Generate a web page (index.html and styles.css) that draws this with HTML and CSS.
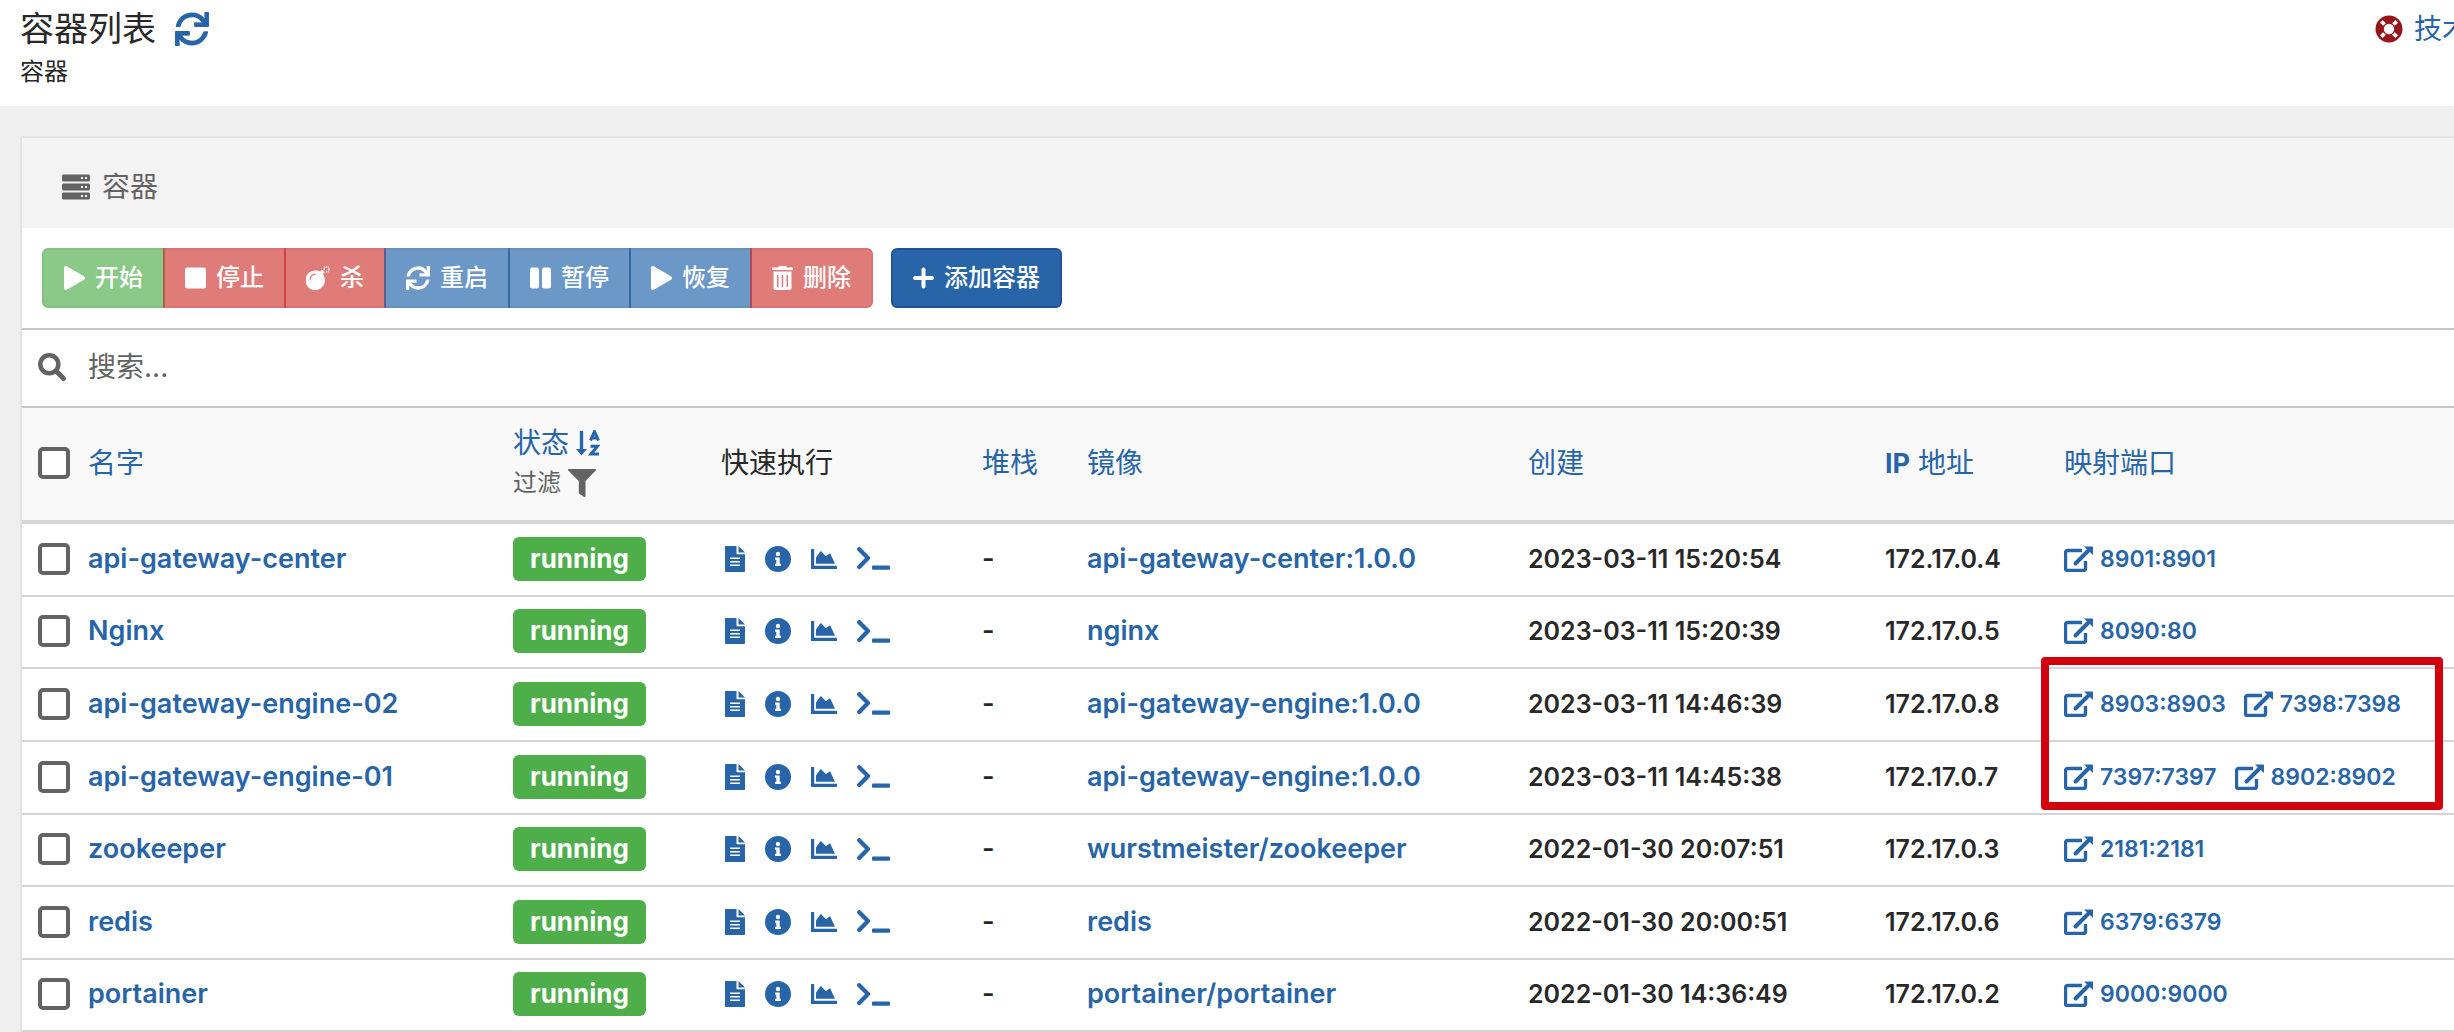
FILE: index.html
```html
<!DOCTYPE html>
<html lang="zh-CN">
<head>
<meta charset="utf-8">
<title>容器列表</title>
<link rel="stylesheet" href="styles.css">
</head>
<body>
<svg class="sprite" aria-hidden="true">
  <symbol id="sync" viewBox="0 0 512 512"><path d="M440.65 12.57l4 82.77A247.16 247.16 0 0 0 255.83 8C134.73 8 33.91 94.92 12.29 209.82A12 12 0 0 0 24.09 224h49.05a12 12 0 0 0 11.67-9.26 175.91 175.91 0 0 1 317-56.94l-101.46-4.86a12 12 0 0 0-12.57 12v47.41a12 12 0 0 0 12 12H500a12 12 0 0 0 12-12V12a12 12 0 0 0-12-12h-47.37a12 12 0 0 0-11.98 12.57zM255.83 432a175.61 175.61 0 0 1-146-77.8l101.8 4.87a12 12 0 0 0 12.57-12v-47.4a12 12 0 0 0-12-12H12a12 12 0 0 0-12 12V500a12 12 0 0 0 12 12h47.35a12 12 0 0 0 12-12.6l-4.15-82.57A247.17 247.17 0 0 0 255.83 504c121.11 0 221.93-86.92 243.55-201.82a12 12 0 0 0-11.8-14.18h-49.05a12 12 0 0 0-11.67 9.26A175.86 175.86 0 0 1 255.83 432z"/></symbol>
  <symbol id="play" viewBox="0 0 21 24"><path d="M0 2C0 .4 1.700-.4 3.100.4L20 10.300c1.300.8 1.300 2.600 0 3.400L3.100 23.600C1.700 24.400 0 23.600 0 22z"/></symbol>
  <symbol id="file" viewBox="0 0 20 26"><path fill-rule="evenodd" d="M1 0h10.500v7.200c0 .6.400 1 1 1H20V25c0 .6-.4 1-1 1H1c-.6 0-1-.4-1-1V1c0-.6.400-1 1-1zM5 11.500V13h10v-1.500zM5 15v1.500h10V15zM5 18.500V20h10v-1.500zM13.500 0L20 6.500h-6.500z"/></symbol>
  <symbol id="info" viewBox="0 0 26 26"><path fill-rule="evenodd" d="M13 0a13 13 0 1 1 0 26 13 13 0 0 1 0-26zM13 5.800a2.200 2.200 0 1 0 0 4.400 2.200 2.200 0 0 0 0-4.400zM10 11.500v2.300h1.300v3.900H10V20h6v-2.300h-1.300v-6.200z"/></symbol>
  <symbol id="chart" viewBox="0 0 26 20"><path d="M0 .6C0 .2.200 0 .6 0h2c.4 0 .6.200.6.600V16.800h22.200c.4 0 .6.200.6.600v2c0 .4-.2.600-.6.600H.6c-.4 0-.6-.2-.6-.6zM5 14.800V8.500l4.300-6c.3-.5.900-.5 1.200 0l4.300 4.800 3.700-2.700c.4-.3.800-.2 1 .300l4.500 9.900z"/></symbol>
  <symbol id="term" viewBox="0 0 33 23"><path d="M2.200 2.200L11 11 2.200 20" fill="none" stroke="currentColor" stroke-width="4.200" stroke-linecap="round" stroke-linejoin="round"/><rect x="15" y="18.600" width="18" height="4.200" rx="1"/></symbol>
  <symbol id="ext" viewBox="0 0 29 26"><path d="M18 4.500H3.500a2 2 0 0 0-2 2v16a2 2 0 0 0 2 2h16a2 2 0 0 0 2-2V15" fill="none" stroke="currentColor" stroke-width="3.400"/><path d="M11.500 17.500L24 5" fill="none" stroke="currentColor" stroke-width="4" stroke-linecap="round"/><path d="M20 .5h8c.6 0 1 .4 1 1V9z"/></symbol>
</svg>

<header class="page-head">
  <div>
    <h1 class="page-title">容器列表 <a href="#" aria-label="刷新"><svg class="i34"><use href="#sync"/></svg></a></h1>
    <p class="crumb">容器</p>
  </div>
  <a class="support" href="#"><svg class="i28 ring" viewBox="0 0 28 28"><circle cx="14" cy="14" r="13.500"/><path d="M6.300 6.300l3.200 3.200M18.500 18.500l3.200 3.200M21.700 6.300l-3.200 3.200M9.500 18.500l-3.200 3.200" stroke="#fff" stroke-width="3.800"/><circle cx="14" cy="14" r="5.200" fill="#fff"/></svg>技术</a>
</header>

<main class="panel">
  <h2 class="panel-head"><svg class="i28" viewBox="0 0 28 28"><path fill-rule="evenodd" d="M1.500 1.500h25c.8 0 1.500.700 1.500 1.500v4c0 .8-.7 1.500-1.500 1.500h-25C.7 8.500 0 7.800 0 7V3c0-.8.700-1.500 1.500-1.500zM19 4v2h2V4zm4 0v2h2V4zM1.500 10.500h25c.8 0 1.500.700 1.500 1.500v4c0 .8-.7 1.500-1.500 1.500h-25C.7 17.500 0 16.800 0 16v-4c0-.8.700-1.500 1.500-1.500zM19 13v2h2v-2zm4 0v2h2v-2zM1.500 19.500h25c.8 0 1.500.700 1.500 1.500v4c0 .8-.7 1.500-1.500 1.500h-25C.7 26.500 0 25.800 0 25v-4c0-.8.700-1.500 1.500-1.500zM19 22v2h2v-2zm4 0v2h2v-2z"/></svg>容器</h2>

  <div class="toolbar">
    <div class="group">
      <button class="btn green" disabled><svg class="b21"><use href="#play"/></svg>开始</button>
      <button class="btn red" disabled><svg class="b21" viewBox="0 0 21 24"><rect y="1.500" width="21" height="21" rx="2.500"/></svg>停止</button>
      <button class="btn red" disabled><svg class="b24" viewBox="0 0 24 24"><path fill-rule="evenodd" d="M9.800 4.500c1.600 0 3 .4 4.300 1l1.300-1.300c.4-.4.900-.4 1.300 0l1.500 1.500c.4.400.4.900 0 1.300l-1.300 1.300A9.800 9.800 0 1 1 9.800 4.500zM4.200 13.700c.8 0 .8-.4.800-.8A4.200 4.200 0 0 1 9.200 9c.8 0 .8-1.500 0-1.500a5.700 5.700 0 0 0-5.700 5.500c0 .4.200.700.700.700z"/><path d="M20.500 0v2M20.500 5v2M17 3.500h2M22 3.500h2M18 1l1 1M23 1l-1 1M23 6l-1-1" stroke="#fff" stroke-width="1.200"/></svg>杀</button>
      <button class="btn blue" disabled><svg class="b24"><use href="#sync"/></svg>重启</button>
      <button class="btn blue" disabled><svg class="b21" viewBox="0 0 21 24"><rect y="1.500" width="9" height="21" rx="2.200"/><rect x="12" y="1.500" width="9" height="21" rx="2.200"/></svg>暂停</button>
      <button class="btn blue" disabled><svg class="b21"><use href="#play"/></svg>恢复</button>
      <button class="btn red" disabled><svg class="b21" viewBox="0 0 21 24"><path fill-rule="evenodd" d="M7 0h7l1 1.500h5.500c.3 0 .5.200.5.500v1.500c0 .3-.2.500-.5.500H.5C.2 4 0 3.800 0 3.500V2c0-.3.200-.5.500-.5H6zM1.500 5.500h18V22c0 1.200-.8 2-2 2h-14c-1.200 0-2-.8-2-2zM5 9v12h1.500V9zm4.700 0v12h1.500V9zm4.800 0v12H16V9z"/></svg>删除</button>
    </div>
    <button class="btn blue"><svg class="b21" viewBox="0 0 21 24"><path d="M10.500 3.500v17M2 12h17" stroke="#fff" stroke-width="4" stroke-linecap="round"/></svg>添加容器</button>
  </div>

  <label class="search">
    <svg class="i28" viewBox="0 0 28 28"><circle cx="11.300" cy="11.300" r="9" fill="none" stroke="currentColor" stroke-width="4.500"/><path d="M18 18l7.500 7.500" stroke="currentColor" stroke-width="4.800" stroke-linecap="round"/></svg>
    <input type="text" placeholder="搜索..." aria-label="搜索">
  </label>

  <table class="list">
    <colgroup><col class="c-name"><col class="c-state"><col class="c-quick"><col class="c-stack"><col class="c-image"><col class="c-date"><col class="c-ip"><col></colgroup>
    <thead>
      <tr>
        <th><div class="name"><input type="checkbox" aria-label="全选"><a href="#">名字</a></div></th>
        <th><a class="line" href="#">状态<svg class="sort" viewBox="0 0 24 26"><path d="M5.500 1v19" stroke="currentColor" stroke-width="3.400"/><path d="M0 19h11l-5.500 6.500z"/><path d="M14.500 10.500L18.500 1.500l4 9M16 8h5M14.500 16.200h7L15 24h8" fill="none" stroke="currentColor" stroke-width="3"/></svg></a><span class="line filter">过滤<svg class="i28" viewBox="0 0 28 28"><path d="M1 0h26c1 0 1.300 1 .7 1.600L17.500 12v15c0 .9-1 1.300-1.700.8l-4.500-3c-.3-.2-.5-.5-.5-.9V12L.3 1.600C-.3 1 0 0 1 0z"/></svg></span></th>
        <th>快速执行</th>
        <th><a href="#">堆栈</a></th>
        <th><a href="#">镜像</a></th>
        <th><a href="#">创建</a></th>
        <th><a href="#"><b>IP</b> 地址</a></th>
        <th><a href="#">映射端口</a></th>
      </tr>
    </thead>
    <tbody id="rows"></tbody>
  </table>
</main>
<script src="rows.js"></script>
</body>
</html>
```
FILE: styles.css
```css
* { box-sizing: border-box; }
body {
  margin: 0;
  overflow-x: hidden;
  background: #efefef;
  color: #282828;
  font: 400 28px/40px Inter, "Noto Sans CJK SC", sans-serif;
}
.sprite { position: absolute; width: 0; height: 0; }
svg { flex: none; fill: currentColor; }
a { color: #2865a8; text-decoration: none; }
.i28 { width: 28px; height: 28px; }
.i34 { width: 34px; height: 34px; display: block; }

.page-head {
  display: flex;
  justify-content: space-between;
  height: 106px;
  padding: 9px 0 0 20px;
  background: #fff;
}
.page-title {
  display: flex;
  align-items: center;
  gap: 19px;
  margin: 0;
  font-size: 34px;
  font-weight: 400;
  line-height: 40px;
}
.crumb { margin: 3px 0 0; font-size: 24px; }
.support {
  display: flex;
  align-items: center;
  gap: 11px;
  width: 79px;
  height: 40px;
  white-space: nowrap;
}
.ring { color: #98141b; }

.panel {
  margin: 30px 0 0 20px;
  border: 2px solid #e3e3e3;
  border-width: 2px 0 0 2px;
  border-radius: 4px 0 0 0;
  background: #fff;
}
.panel-head {
  display: flex;
  align-items: center;
  gap: 12px;
  height: 90px;
  margin: 0;
  padding: 8px 40px 0;
  background: #f3f3f3;
  color: #636363;
  font-size: 28px;
  font-weight: 400;
}
.toolbar {
  display: flex;
  gap: 18px;
  padding: 20px;
  border-bottom: 2px solid #c5c5c5;
}
.group { display: flex; }
.group .btn { border-radius: 0; }
.group .btn + .btn { margin-left: -2px; }
.group .btn:first-child { border-radius: 6px 0 0 6px; }
.group .btn:last-child { border-radius: 0 6px 6px 0; }
.btn {
  display: flex;
  align-items: center;
  gap: 10px;
  height: 60px;
  padding: 0 20px;
  border: 2px solid;
  border-radius: 6px;
  color: #fff;
  font: 500 24px/36px Inter, "Noto Sans CJK SC", sans-serif;
}
.btn:disabled { opacity: .66; }
.green { background: #4eae4a; border-color: #45a041; }
.red { background: #d03a36; border-color: #c92c28; }
.blue { background: #2865a8; border-color: #205490; }
.blue:disabled { background: #1f64aa; border-color: #1c5798; }
.b21 { width: 21px; height: 24px; }
.b24 { width: 24px; height: 24px; }

.search {
  display: flex;
  align-items: center;
  gap: 20px;
  height: 78px;
  padding: 0 16px 2px;
  border-bottom: 2px solid #c5c5c5;
  color: #636363;
}
.search input {
  flex: 1;
  padding: 0 2px;
  border: 0;
  outline: 0;
  background: none;
  color: inherit;
  font: inherit;
}
.search input::placeholder { color: #636363; opacity: 1; }

.list { width: 100%; table-layout: fixed; border-spacing: 0; }
.c-name { width: 475px; }
.c-state { width: 208px; }
.c-quick { width: 261px; }
.c-stack { width: 105px; }
.c-image { width: 441px; }
.c-date { width: 357px; }
.c-ip { width: 179px; }
th, td { padding: 0 0 2px 16px; text-align: left; vertical-align: middle; white-space: nowrap; }
th {
  height: 116px;
  border-bottom: 4px solid #d5d5d5;
  background: #f9f9f9;
  font-weight: 400;
}
th b { font-size: 27px; font-weight: 700; }
td { height: 73px; border-bottom: 2px solid #d5d5d5; font-size: 27px; font-weight: 600; }
tr:nth-child(3n+2) td, tr:last-child td { height: 72px; }
.line { display: flex; align-items: center; gap: 7px; }
.filter { color: #636363; font-size: 24px; }
.sort { width: 24px; height: 26px; }
.name { display: flex; align-items: center; gap: 18px; }
input[type="checkbox"] {
  appearance: none;
  flex: none;
  width: 32px;
  height: 32px;
  margin: 0;
  border: 4px solid #636363;
  border-radius: 5px;
  background: #fff;
}
.badge {
  display: flex;
  align-items: center;
  justify-content: center;
  width: 133px;
  height: 44px;
  border-radius: 6px;
  background: #4eae4a;
  color: #fff;
  font-size: 26px;
  font-weight: 700;
}
.quick { display: flex; align-items: center; gap: 20px; padding-left: 4px; }
.quick a { display: flex; }
.file { width: 20px; height: 26px; }
.info { width: 26px; height: 26px; }
.chart { width: 26px; height: 20px; }
.term { width: 33px; height: 23px; }
.num { font-size: 25px; }
.ports { position: relative; font-size: 23px; }
.port-list { display: flex; gap: 18px; }
.port-list a { display: flex; align-items: center; gap: 7px; }
.ext { width: 29px; height: 26px; }
.mark {
  position: absolute;
  top: -12px;
  left: -7px;
  width: 402px;
  height: 153px;
  border: 8px solid #d2000f;
  border-radius: 4px;
  pointer-events: none;
}
```
FILE: rows.js
```js
const rows = [
  ["api-gateway-center", "api-gateway-center:1.0.0", "2023-03-11 15:20:54", "172.17.0.4", ["8901:8901"]],
  ["Nginx", "nginx", "2023-03-11 15:20:39", "172.17.0.5", ["8090:80"]],
  ["api-gateway-engine-02", "api-gateway-engine:1.0.0", "2023-03-11 14:46:39", "172.17.0.8", ["8903:8903", "7398:7398"], true],
  ["api-gateway-engine-01", "api-gateway-engine:1.0.0", "2023-03-11 14:45:38", "172.17.0.7", ["7397:7397", "8902:8902"]],
  ["zookeeper", "wurstmeister/zookeeper", "2022-01-30 20:07:51", "172.17.0.3", ["2181:2181"]],
  ["redis", "redis", "2022-01-30 20:00:51", "172.17.0.6", ["6379:6379"]],
  ["portainer", "portainer/portainer", "2022-01-30 14:36:49", "172.17.0.2", ["9000:9000"]]
];
const icon = n => `<svg class="${n}"><use href="#${n}"/></svg>`;
document.getElementById("rows").innerHTML = rows.map(([name, image, date, ip, ports, marked]) => `
<tr>
  <td><div class="name"><input type="checkbox" aria-label="${name}"><a href="#">${name}</a></div></td>
  <td><span class="badge">running</span></td>
  <td><div class="quick">${["file", "info", "chart", "term"].map(n => `<a href="#" aria-label="${n}">${icon(n)}</a>`).join("")}</div></td>
  <td>-</td>
  <td><a href="#">${image}</a></td>
  <td class="num">${date}</td>
  <td class="num">${ip}</td>
  <td class="ports"><div class="port-list">${ports.map(p => `<a href="#">${icon("ext")}${p}</a>`).join("")}</div>${marked ? '<div class="mark"></div>' : ""}</td>
</tr>`).join("");
```
